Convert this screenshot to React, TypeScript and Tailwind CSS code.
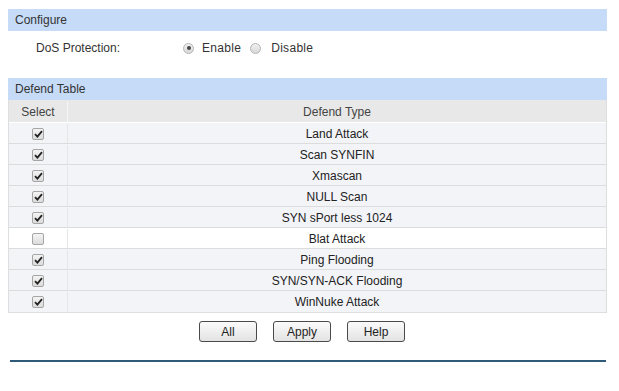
import React from 'react'

const rows = [
  { name: 'Land Attack', on: true },
  { name: 'Scan SYNFIN', on: true },
  { name: 'Xmascan', on: true },
  { name: 'NULL Scan', on: true },
  { name: 'SYN sPort less 1024', on: true },
  { name: 'Blat Attack', on: false },
  { name: 'Ping Flooding', on: true },
  { name: 'SYN/SYN-ACK Flooding', on: true },
  { name: 'WinNuke Attack', on: true },
]

function Check({ on }: { on: boolean }) {
  return (
    <span className="flex h-[12px] w-[12px] items-center justify-center rounded-[2px] border border-[#a5a5a5] bg-gradient-to-b from-[#f4f4f4] to-[#dcdcdc]">
      {on && (
        <svg width="9" height="8" viewBox="0 0 9 8">
          <path d="M1 4.2 L3.4 6.6 L8 1.2" fill="none" stroke="#222" strokeWidth="1.8" />
        </svg>
      )}
    </span>
  )
}

function Radio({ on }: { on: boolean }) {
  return (
    <span className="flex h-[11px] w-[11px] items-center justify-center rounded-full border border-[#b4b4b4] bg-gradient-to-b from-[#f0f0f0] to-[#d8d8d8]">
      {on && <span className="h-[4px] w-[4px] rounded-full bg-[#444]" />}
    </span>
  )
}

function Btn({ label }: { label: string }) {
  return (
    <button className="h-[21px] w-[58px] rounded-[3px] border border-[#4a4a4a] bg-gradient-to-b from-[#fbfbfb] to-[#e3e3e3] text-[12px] text-[#222]">
      {label}
    </button>
  )
}

export default function App() {
  return (
    <div className="h-[391px] w-[619px] bg-white pt-[9px] text-[12px] text-[#333]" style={{ fontFamily: '"Liberation Sans", Arial, sans-serif' }}>
      <div className="ml-[8px] w-[599px]">
        <div className="flex h-[22px] items-center bg-[#c6dbf8] pl-[7px] text-[#333]">Configure</div>
        <div className="mb-[13px] flex h-[34px] items-center">
          <span className="ml-[28px] w-[147px]">DoS Protection:</span>
          <Radio on />
          <span className="ml-[8px] tracking-[0.3px]">Enable</span>
          <span className="ml-[9px]"><Radio on={false} /></span>
          <span className="ml-[10px] tracking-[0.3px]">Disable</span>
        </div>
        <div className="flex h-[22px] items-center bg-[#c6dbf8] pl-[7px]">Defend Table</div>
        <div className="border-x border-b border-[#dedede]">
          <div className="flex h-[23px] items-center border-b border-white bg-[#e8e8e8] pt-[1px] text-[#444]">
            <div className="flex h-full w-[59px] items-center justify-center border-r border-[#f6f6f6]">Select</div>
            <div className="flex-1 text-center">Defend Type</div>
          </div>
          {rows.map((r, i) => (
            <div
              key={r.name}
              className={`flex h-[21px] items-center pt-[1px] ${i < rows.length - 1 ? 'border-b border-[#dcdcdc]' : ''} ${r.on ? 'bg-[#f3f4f8]' : 'bg-white'} text-[#222]`}
            >
              <div className="flex h-full w-[59px] items-center justify-center border-r border-[#e6e6e6]">
                <Check on={r.on} />
              </div>
              <div className="flex-1 text-center">{r.name}</div>
            </div>
          ))}
        </div>
        <div className="mt-[8px] flex justify-center gap-[16px] pr-[11px]">
          <Btn label="All" />
          <Btn label="Apply" />
          <Btn label="Help" />
        </div>
        <div className="ml-[2px] mt-[18px] h-[2px] w-[596px] bg-[#2f5b78]" />
      </div>
    </div>
  )
}
